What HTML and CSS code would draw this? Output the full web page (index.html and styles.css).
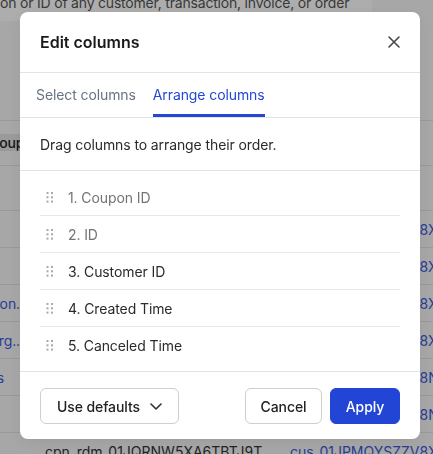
FILE: index.html
```html
<!DOCTYPE html>
<html lang="en">
<head>
<meta charset="utf-8">
<title>Edit columns</title>
<link rel="stylesheet" href="styles.css">
</head>
<body>
<div class="page">
  <div class="search"><span class="search-text">on or ID of any customer, transaction, invoice, or order</span></div>
  <div class="table">
    <div class="thead">
      <div class="hcell"><span class="chip">Coupon ID</span></div>
    </div>
    <div class="trow tall"></div>
    <div class="trow"><div class="c1"></div><div class="c2"></div><div class="c3 link">cus_01JPMQYSZZV8X</div></div>
    <div class="trow"><div class="c1"></div><div class="c2"></div><div class="c3 link">cus_01JPMQYSZZV8X</div></div>
    <div class="trow"><div class="c1 link"><span>promotion.</span></div><div class="c2"></div><div class="c3 link">cus_01JPMQYSZZV8X</div></div>
    <div class="trow"><div class="c1 link"><span>acme.org..</span></div><div class="c2"></div><div class="c3 link">cus_01JPMQYSZZV8X</div></div>
    <div class="trow"><div class="c1 link short"><span>bonus</span></div><div class="c2"></div><div class="c3 link">cus_01JPMQYSZZV8N</div></div>
    <div class="trow"><div class="c1"></div><div class="c2"></div><div class="c3 link">cus_01JPMQYSZZV8N</div></div>
    <div class="trow"><div class="c1"></div><div class="c2">cpn_rdm_01JQRNW5XA6TBTJ9T</div><div class="c3 link">cus_01JPMQYSZZV8X</div></div>
  </div>
</div>

<div class="overlay"></div>

<div class="modal" role="dialog" aria-label="Edit columns">
  <div class="m-header">
    <h2 class="m-title">Edit columns</h2>
    <button class="close" aria-label="Close">
      <svg width="12" height="12" viewBox="0 0 12 12"><path d="M1 1L11 11M11 1L1 11" stroke="#474747" stroke-width="1.6" stroke-linecap="round" fill="none"/></svg>
    </button>
  </div>
  <div class="tabs">
    <div class="tab">Select columns</div>
    <div class="tab active">Arrange columns</div>
  </div>
  <div class="desc">Drag columns to arrange their order.</div>
  <div class="list">
    <div class="item muted"><svg class="handle" width="8" height="12" viewBox="0 0 8 12"><g fill="#a9a9a9"><rect x="0.5" y="1" width="2" height="2"/><rect x="5" y="1" width="2" height="2"/><rect x="0.5" y="5.3" width="2" height="2"/><rect x="5" y="5.3" width="2" height="2"/><rect x="0.5" y="9.6" width="2" height="2"/><rect x="5" y="9.6" width="2" height="2"/></g></svg><span>1. Coupon ID</span></div>
    <div class="item muted"><svg class="handle" width="8" height="12" viewBox="0 0 8 12"><g fill="#a9a9a9"><rect x="0.5" y="1" width="2" height="2"/><rect x="5" y="1" width="2" height="2"/><rect x="0.5" y="5.3" width="2" height="2"/><rect x="5" y="5.3" width="2" height="2"/><rect x="0.5" y="9.6" width="2" height="2"/><rect x="5" y="9.6" width="2" height="2"/></g></svg><span>2. ID</span></div>
    <div class="item"><svg class="handle" width="8" height="12" viewBox="0 0 8 12"><g fill="#a9a9a9"><rect x="0.5" y="1" width="2" height="2"/><rect x="5" y="1" width="2" height="2"/><rect x="0.5" y="5.3" width="2" height="2"/><rect x="5" y="5.3" width="2" height="2"/><rect x="0.5" y="9.6" width="2" height="2"/><rect x="5" y="9.6" width="2" height="2"/></g></svg><span>3. Customer ID</span></div>
    <div class="item"><svg class="handle" width="8" height="12" viewBox="0 0 8 12"><g fill="#a9a9a9"><rect x="0.5" y="1" width="2" height="2"/><rect x="5" y="1" width="2" height="2"/><rect x="0.5" y="5.3" width="2" height="2"/><rect x="5" y="5.3" width="2" height="2"/><rect x="0.5" y="9.6" width="2" height="2"/><rect x="5" y="9.6" width="2" height="2"/></g></svg><span>4. Created Time</span></div>
    <div class="item"><svg class="handle" width="8" height="12" viewBox="0 0 8 12"><g fill="#a9a9a9"><rect x="0.5" y="1" width="2" height="2"/><rect x="5" y="1" width="2" height="2"/><rect x="0.5" y="5.3" width="2" height="2"/><rect x="5" y="5.3" width="2" height="2"/><rect x="0.5" y="9.6" width="2" height="2"/><rect x="5" y="9.6" width="2" height="2"/></g></svg><span>5. Canceled Time</span></div>
  </div>
  <div class="m-footer">
    <button class="btn defaults"><span>Use defaults</span>
      <svg width="12" height="7" viewBox="0 0 12 7"><path d="M1 1L6 6L11 1" stroke="#333" stroke-width="1.6" fill="none" stroke-linecap="round" stroke-linejoin="round"/></svg>
    </button>
    <div class="actions">
      <button class="btn cancel">Cancel</button>
      <button class="btn primary">Apply</button>
    </div>
  </div>
</div>
</body>
</html>
```
FILE: styles.css
```css
* { box-sizing: border-box; }
html, body { margin: 0; padding: 0; }
body {
  font-family: Inter, "Noto Sans", "Liberation Sans", sans-serif;
  font-size: 14px;
  letter-spacing: -0.1px;
  color: #222;
  background: #f7f7f7;
  overflow: hidden;
  width: 433px;
  height: 454px;
}
.page { width: 433px; }
.search {
  width: 372px;
  height: 21px;
  background: #ffffff;
  overflow: hidden;
}
.search-text {
  display: block;
  margin-top: -7px;
  line-height: 20px;
  color: #555;
  white-space: nowrap;
  letter-spacing: -0.2px;
}
.table {
  margin-top: 99px;
  border-top: 1px solid #e2e2e2;
}
.thead {
  height: 45px;
  border-bottom: 1px solid #e2e2e2;
  display: flex;
  align-items: center;
}
.hcell { width: 200px; margin-left: -11px; }
.chip {
  display: block;
  height: 17px;
  background: #e4e4e4;
  font-weight: 500;
  line-height: 17px;
  color: #222;
  margin-top: -1px;
  white-space: nowrap;
}
.trow {
  height: 37px;
  border-bottom: 1px solid #e2e2e2;
  display: flex;
  align-items: center;
  white-space: nowrap;
}
.trow.tall { height: 45px; }
.c1 {
  width: 45px;
  padding-right: 25px;
  display: flex;
  justify-content: flex-end;
  overflow: hidden;
}
.c1 span { flex-shrink: 0; }
.c1.short { padding-right: 41px; }
.c2 { width: 245px; color: #333; overflow: hidden; letter-spacing: 0; }
.c3 { flex: 1; overflow: hidden; letter-spacing: 0; }
.link { color: #3a5bdc; }

.overlay {
  position: fixed;
  inset: 0;
  background: rgba(0, 0, 0, 0.32);
}
.modal {
  position: fixed;
  left: 20px;
  top: 12px;
  width: 400px;
  background: #fff;
  border-radius: 8px;
  box-shadow: 0 4px 16px rgba(0,0,0,0.08);
}
.m-header {
  height: 61px;
  border-bottom: 1px solid #e3e3e3;
  padding: 0 20px;
  display: flex;
  align-items: center;
  justify-content: space-between;
}
.m-title {
  margin: 0;
  font-size: 16px;
  font-weight: 600;
  letter-spacing: 0;
  color: #1a1a1a;
}
.close {
  width: 28px;
  height: 28px;
  margin-right: -8px;
  padding: 0;
  border: 0;
  background: none;
  display: flex;
  align-items: center;
  justify-content: center;
}
.tabs {
  height: 45px;
  border-bottom: 1px solid #e3e3e3;
  padding-left: 16px;
  display: flex;
  gap: 17px;
}
.tab {
  height: 44px;
  line-height: 44px;
  color: #687385;
}
.tab.active {
  color: #2347d8;
  box-shadow: inset 0 -3px 0 #2347d8;
}
.desc {
  height: 53px;
  border-bottom: 1px solid #e3e3e3;
  padding: 0 20px;
  display: flex;
  align-items: center;
  color: #2a2a2a;
}
.list {
  padding: 8px 20px;
  border-bottom: 1px solid #e3e3e3;
}
.item {
  height: 37px;
  border-bottom: 1px solid #e8e8e8;
  display: flex;
  align-items: center;
  gap: 14px;
  padding-left: 6px;
  color: #2b2b2b;
}
.item:last-child { border-bottom: 0; height: 36px; }
.item.muted { color: #747474; }
.handle { flex-shrink: 0; }
.m-footer {
  padding: 16px 20px 15px;
  display: flex;
  justify-content: space-between;
  align-items: center;
}
.actions { display: flex; gap: 8px; }
.btn {
  height: 36px;
  padding: 0 15px;
  border: 1px solid #cfcfcf;
  border-radius: 6px;
  background: #fff;
  font-family: inherit;
  font-size: 14px;
  font-weight: 500;
  letter-spacing: -0.1px;
  color: #222;
  display: flex;
  align-items: center;
  justify-content: center;
  white-space: nowrap;
}
.btn.defaults {
  width: 139px;
  padding: 0 16px;
  justify-content: space-between;
}
.btn.cancel { width: 77px; padding: 0; }
.btn.primary {
  width: 70px;
  padding: 0;
  background: #2245d6;
  border-color: #2245d6;
  color: #fff;
}
```
